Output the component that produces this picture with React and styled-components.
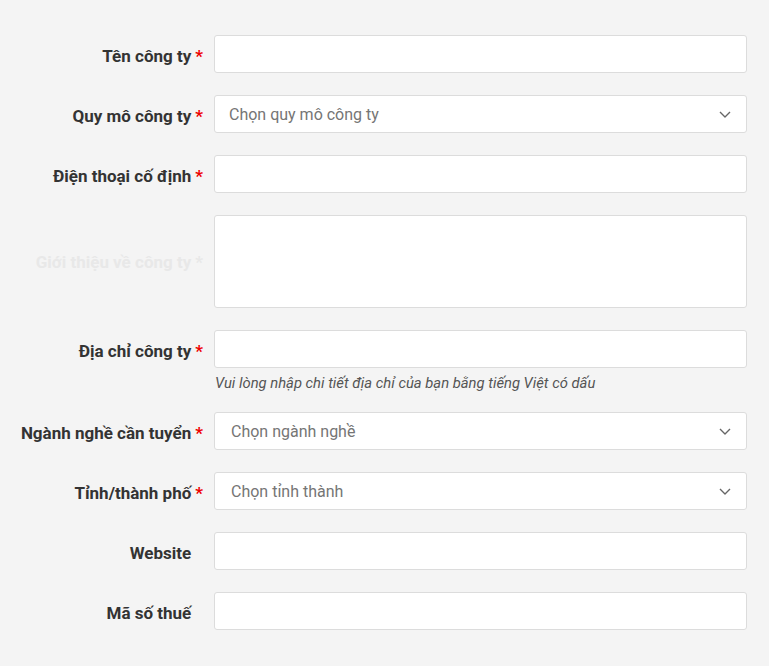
import React from 'react';
import styled, { createGlobalStyle } from 'styled-components';

const GlobalStyle = createGlobalStyle`
  body {
    margin: 0;
    background: #f4f4f4;
    font-family: Roboto, "Liberation Sans", sans-serif;
  }
`;

const Page = styled.div`
  width: 769px;
  min-height: 666px;
  box-sizing: border-box;
  padding: 35px 22px 0 0;
  background: #f4f4f4;
`;

const Form = styled.form`
  display: flex;
  flex-direction: column;
  gap: 22px;
`;

const Row = styled.div`
  display: grid;
  grid-template-columns: 203px 533px;
  column-gap: 11px;
  align-items: ${props => (props.$center ? 'center' : 'start')};
`;

const Label = styled.label`
  display: flex;
  justify-content: flex-end;
  align-items: center;
  box-sizing: border-box;
  min-height: 38px;
  padding-top: ${props => (props.$tall ? 0 : 4)}px;
  font-size: 17px;
  font-weight: 700;
  color: ${props => (props.$faded ? '#e8e8e8' : '#333')};
  white-space: nowrap;
`;

const Star = styled.span`
  margin-left: 4px;
  color: ${props => (props.$faded ? '#e8e8e8' : '#e00')};
  visibility: ${props => (props.$hide ? 'hidden' : 'visible')};
`;

const Field = styled.div`
  display: flex;
  flex-direction: column;
`;

const Input = styled.input`
  box-sizing: border-box;
  width: 100%;
  height: 38px;
  padding: 0 15px;
  border: 1px solid #dcdcdc;
  border-radius: 3px;
  background: #fff;
  font-family: inherit;
  font-size: 16px;
  color: #333;

  &:focus {
    outline: none;
  }
`;

const TextArea = styled.textarea`
  box-sizing: border-box;
  display: block;
  width: 100%;
  height: 93px;
  padding: 10px 15px;
  border: 1px solid #dcdcdc;
  border-radius: 3px;
  background: #fff;
  resize: none;
  font-family: inherit;
  font-size: 16px;

  &:focus {
    outline: none;
  }
`;

const SelectBox = styled.div`
  box-sizing: border-box;
  display: flex;
  align-items: center;
  justify-content: space-between;
  height: 38px;
  padding: 1px 15px 0 ${props => props.$indent}px;
  border: 1px solid #dcdcdc;
  border-radius: 3px;
  background: #fff;
  font-size: 16px;
  color: #757575;
  cursor: pointer;
`;

const Hint = styled.div`
  margin-top: 8px;
  padding-left: 1px;
  font-size: 14.8px;
  line-height: 14px;
  font-style: italic;
  color: #555;
`;

const Chevron = () => (
  <svg width="12" height="7" viewBox="0 0 12 7" fill="none">
    <polyline points="1,1 6,6 11,1" stroke="#666" strokeWidth="1.4" strokeLinejoin="round" />
  </svg>
);

const Select = ({ placeholder, indent = 16 }) => (
  <SelectBox $indent={indent}>
    <span>{placeholder}</span>
    <Chevron />
  </SelectBox>
);

const FormLabel = ({ children, required, faded, tall }) => (
  <Label $faded={faded} $tall={tall}>
    {children}
    <Star $hide={!required} $faded={faded}>*</Star>
  </Label>
);

const App = () => {
  return (
    <Page>
      <GlobalStyle />
      <Form>
        <Row $center>
          <FormLabel required>Tên công ty</FormLabel>
          <Input type="text" />
        </Row>
        <Row $center>
          <FormLabel required>Quy mô công ty</FormLabel>
          <Select placeholder="Chọn quy mô công ty" indent={14} />
        </Row>
        <Row $center>
          <FormLabel required>Điện thoại cố định</FormLabel>
          <Input type="text" />
        </Row>
        <Row $center>
          <FormLabel required faded tall>Giới thiệu về công ty</FormLabel>
          <TextArea />
        </Row>
        <Row>
          <FormLabel required>Địa chỉ công ty</FormLabel>
          <Field>
            <Input type="text" />
            <Hint>Vui lòng nhập chi tiết địa chỉ của bạn bằng tiếng Việt có dấu</Hint>
          </Field>
        </Row>
        <Row $center>
          <FormLabel required>Ngành nghề cần tuyển</FormLabel>
          <Select placeholder="Chọn ngành nghề" />
        </Row>
        <Row $center>
          <FormLabel required>Tỉnh/thành phố</FormLabel>
          <Select placeholder="Chọn tỉnh thành" />
        </Row>
        <Row $center>
          <FormLabel>Website</FormLabel>
          <Input type="text" />
        </Row>
        <Row $center>
          <FormLabel>Mã số thuế</FormLabel>
          <Input type="text" />
        </Row>
      </Form>
    </Page>
  );
};

export default App;
